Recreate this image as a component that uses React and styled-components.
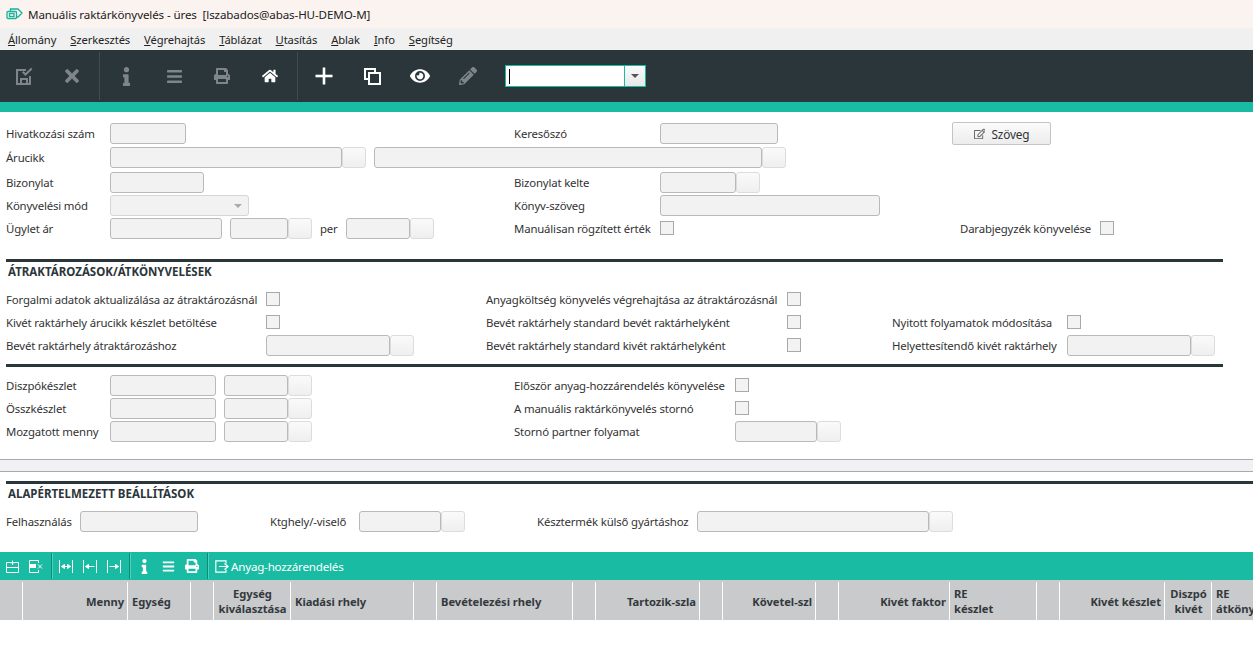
import React from 'react';
import styled, { createGlobalStyle } from 'styled-components';
import { FaTimes, FaInfo, FaBars, FaPrint, FaHome, FaEye, FaPencilAlt, FaRegEdit } from 'react-icons/fa';

const dark = '#2b363b';
const teal = '#1abba3';

const GlobalStyle = createGlobalStyle`
  html, body {
    margin: 0;
    padding: 0;
    background: #fff;
    overflow: hidden;
  }
  body {
    font-family: "Noto Sans", "Open Sans", sans-serif;
    font-size: 11.4px;
    letter-spacing: -0.17px;
    color: #333;
  }
`;

const Page = styled.div`
  width: 1253px;
  height: 668px;
  overflow: hidden;
  background: #fff;
`;

const TitleBar = styled.div`
  height: 28px;
  display: flex;
  align-items: center;
  gap: 5px;
  padding-left: 6px;
  background: #fbf3f0;
  color: #222;
  font-size: 11.6px;
  letter-spacing: -0.12px;
`;

const MenuBar = styled.div`
  height: 22px;
  display: flex;
  align-items: center;
  gap: 14px;
  padding-left: 8px;
  background: #f0f0f0;
  color: #222;
  font-size: 11.2px;
  letter-spacing: -0.1px;
`;

const Toolbar = styled.div`
  height: 52px;
  display: flex;
  align-items: center;
  background: ${dark};
`;

const ToolButton = styled.div`
  width: 48px;
  height: 48px;
  display: flex;
  align-items: center;
  justify-content: center;
  color: ${p => (p.$off ? '#7f8689' : '#fff')};
  font-size: ${p => p.$size || 17}px;
`;

const ToolSep = styled.div`
  width: 1px;
  height: 48px;
  margin: 0 2px 0 3px;
  background: #414c51;
`;

const Combo = styled.div`
  width: 141px;
  height: 22px;
  box-sizing: border-box;
  margin-left: 13px;
  display: flex;
  border: 1px solid ${teal};
  background: #fff;
`;

const ComboText = styled.div`
  flex: 1;
  display: flex;
  align-items: center;
  padding-left: 3px;
`;

const Cursor = styled.div`
  width: 1px;
  height: 15px;
  background: #000;
`;

const ComboButton = styled.div`
  width: 20px;
  display: flex;
  align-items: center;
  justify-content: center;
  border-left: 1px solid ${teal};
  background: linear-gradient(#fafafa, #e8e8e8);
`;

const Arrow = styled.div`
  width: 0;
  height: 0;
  border-left: 4px solid transparent;
  border-right: 4px solid transparent;
  border-top: 4px solid ${p => p.$color || '#555'};
`;

const AccentBar = styled.div`
  height: 10px;
  background: ${teal};
`;

const Row = styled.div`
  height: 21px;
  margin-top: ${p => p.$mt || 0}px;
  padding-left: 6px;
  display: flex;
  align-items: center;
`;

const Label = styled.div`
  width: ${p => p.$w}px;
  margin-left: ${p => p.$ml || 0}px;
  flex: none;
  white-space: nowrap;
`;

const Input = styled.div`
  width: ${p => p.$w}px;
  height: 21px;
  box-sizing: border-box;
  margin-left: ${p => p.$ml || 0}px;
  flex: none;
  border: 1px solid #b9b9b9;
  border-radius: 3px;
  background: #f2f2f2;
`;

const Lookup = styled.div`
  width: 24px;
  height: 21px;
  box-sizing: border-box;
  flex: none;
  border: 1px solid #dcdcdc;
  border-radius: 3px;
  background: linear-gradient(#fafafa, #efefef);
`;

const SelectBox = styled(Input)`
  display: flex;
  align-items: center;
  justify-content: flex-end;
  padding-right: 6px;
  border-color: #d6d6d6;
`;

const Check = styled.div`
  width: 14px;
  height: 14px;
  box-sizing: border-box;
  margin-left: ${p => p.$ml || 0}px;
  margin-bottom: 1px;
  flex: none;
  border: 1px solid #a9a9a9;
  background: #f3f3f3;
`;

const TextButton = styled.div`
  width: 99px;
  height: 23px;
  box-sizing: border-box;
  margin-left: ${p => p.$ml}px;
  flex: none;
  display: flex;
  align-items: center;
  justify-content: center;
  gap: 6px;
  border: 1px solid #c4c4c4;
  border-radius: 2px;
  background: linear-gradient(#fbfbfb, #ececec);
  color: #333;
  font-size: 11.8px;
  svg {
    color: #666;
  }
`;

const Rule = styled.div`
  height: ${p => p.$h || 3}px;
  margin-top: ${p => p.$mt || 0}px;
  margin-left: 6px;
  width: ${p => p.$w}px;
  background: ${dark};
`;

const SectionTitle = styled.div`
  height: 19px;
  line-height: 19px;
  padding-left: 8px;
  font-weight: 700;
  font-size: 11.5px;
  letter-spacing: 0;
  color: #2b363b;
`;

const Band = styled.div`
  height: 11px;
  margin-top: 17px;
  border-top: 1px solid #aaa;
  border-bottom: 1px solid #aaa;
  background: #f0f0f5;
`;

const GridBar = styled.div`
  height: 28px;
  margin-top: 20px;
  display: flex;
  align-items: center;
  background: ${teal};
  color: #fff;
`;

const GridButton = styled.div`
  width: 24px;
  height: 26px;
  display: flex;
  align-items: center;
  justify-content: center;
  font-size: ${p => p.$size || 13}px;
`;

const GridSep = styled.div`
  width: 1px;
  height: 26px;
  margin: 0 2px 0 3px;
  background: #0c8a78;
  box-shadow: 1px 0 0 #4fd0bc;
`;

const GridAction = styled.div`
  display: flex;
  align-items: center;
  gap: 2px;
  margin-left: 5px;
  font-size: 11.6px;
  letter-spacing: -0.2px;
`;

const HeaderRow = styled.div`
  height: 40px;
  display: grid;
  grid-template-columns: 22px 105px 63px 23px 77px 123px 23px 136px 23px 104px 23px 93px 23px 111px 87px 23px 105px 47px 60px;
  width: 1270px;
  background: #c9cacc;
`;

const HeaderCell = styled.div`
  margin-top: 2px;
  padding: 0 3px 0 4px;
  border-left: ${p => (p.$first ? 'none' : '1px solid #fff')};
  display: flex;
  align-items: center;
  justify-content: ${p => (p.$align === 'right' ? 'flex-end' : p.$align === 'center' ? 'center' : 'flex-start')};
  text-align: ${p => p.$align || 'left'};
  font-weight: 700;
  font-size: 11.2px;
  letter-spacing: -0.05px;
  line-height: 15px;
  color: #33393d;
  overflow: hidden;
`;

const AppLogo = () => (
  <svg width="17" height="13" viewBox="0 0 17 13" fill="none" stroke="#16b39b" strokeWidth="1.3">
    <path d="M4.5 3V1h7.5l4 4-4 4H11" />
    <rect x="1" y="3.5" width="9.5" height="7" rx="1" />
    <rect x="3.5" y="5.5" width="4.5" height="3" />
  </svg>
);

const SaveIcon = () => (
  <svg width="18" height="18" viewBox="0 0 18 18" fill="#7f8689">
    <path fillRule="evenodd" d="M1 2h10v2H3v12h2v-5h8v5h1V9h2v9H1zM7 13v3h4v-3z" />
    <path d="M7 5.5l1.5-1.5 2 2L16 .8 17.4 2.2 10.5 9z" />
  </svg>
);

const PlusIcon = () => (
  <svg width="18" height="18" viewBox="0 0 18 18" fill="#fff">
    <rect x="0.5" y="7.7" width="17" height="2.6" />
    <rect x="7.7" y="0.5" width="2.6" height="17" />
  </svg>
);

const CopyIcon = () => (
  <svg width="17" height="17" viewBox="0 0 17 17" fill="none" stroke="#fff" strokeWidth="2">
    <path d="M11 4V1H1v10h3" />
    <rect x="5" y="5" width="11" height="11" />
  </svg>
);

const RowAddIcon = () => (
  <svg width="13" height="13" viewBox="0 0 13 13" fill="none" stroke="#fff" strokeWidth="1">
    <path d="M4 2.5H.5v10h12v-10H9M.5 7.5h12M6.5 .5v4.5M4 2.7h5" />
  </svg>
);

const RowRemoveIcon = () => (
  <svg width="14" height="13" viewBox="0 0 14 13" fill="none" stroke="#fff" strokeWidth="1">
    <path d="M9.5 3V.5H.5v12h9V10" />
    <rect x="1" y="4" width="6" height="4" fill="#fff" stroke="none" />
    <path d="M9 4.5l4 4M13 4.5l-4 4" />
  </svg>
);

const ColumnIcon = ({ left, right }) => (
  <svg width="14" height="13" viewBox="0 0 14 13" fill="none" stroke="#fff" strokeWidth="1">
    <path d="M.5 0v13M13.5 0v13M2.5 6.5h9" />
    {left && <path d="M5.5 4.5l-3 2 3 2z" fill="#fff" />}
    {right && <path d="M8.5 4.5l3 2-3 2z" fill="#fff" />}
  </svg>
);

const ExportIcon = () => (
  <svg width="14" height="13" viewBox="0 0 14 13" fill="none" stroke="#fff" strokeWidth="1.2">
    <path d="M11 3.5V.8H.8v11.4H11V9.5" />
    <path d="M4 6.5h9M9.5 3.5l3.5 3-3.5 3" />
  </svg>
);

const MenuItem = ({ first, rest }) => (
  <span><u>{first}</u>{rest}</span>
);

const headers = [
  { text: '', first: true },
  { text: 'Menny', align: 'right' },
  { text: 'Egység' },
  { text: '' },
  { text: 'Egység kiválasztása', align: 'center' },
  { text: 'Kiadási rhely' },
  { text: '' },
  { text: 'Bevételezési rhely' },
  { text: '' },
  { text: 'Tartozik-szla', align: 'right' },
  { text: '' },
  { text: 'Követel-szl', align: 'right' },
  { text: '' },
  { text: 'Kivét faktor', align: 'right' },
  { text: <>RE<br />készlet</> },
  { text: '' },
  { text: 'Kivét készlet', align: 'right' },
  { text: 'Diszpó kivét', align: 'center' },
  { text: <>RE<br />átkönyv.</> },
];

export default function App() {
  return (
    <Page>
      <GlobalStyle />
      <TitleBar>
        <AppLogo />
        <span>Manuális raktárkönyvelés - üres&nbsp; [lszabados@abas-HU-DEMO-M]</span>
      </TitleBar>
      <MenuBar>
        <MenuItem first="Á" rest="llomány" />
        <MenuItem first="S" rest="zerkesztés" />
        <MenuItem first="V" rest="égrehajtás" />
        <MenuItem first="T" rest="áblázat" />
        <MenuItem first="U" rest="tasítás" />
        <MenuItem first="A" rest="blak" />
        <MenuItem first="I" rest="nfo" />
        <MenuItem first="S" rest="egítség" />
      </MenuBar>
      <Toolbar>
        <ToolButton><SaveIcon /></ToolButton>
        <ToolButton $off $size={20}><FaTimes /></ToolButton>
        <ToolSep />
        <ToolButton $off $size={19}><FaInfo /></ToolButton>
        <ToolButton $off $size={17}><FaBars /></ToolButton>
        <ToolButton $off $size={16}><FaPrint /></ToolButton>
        <ToolButton $size={16}><FaHome /></ToolButton>
        <ToolSep />
        <ToolButton><PlusIcon /></ToolButton>
        <ToolButton><CopyIcon /></ToolButton>
        <ToolButton $size={20}><FaEye /></ToolButton>
        <ToolButton $off $size={18}><FaPencilAlt /></ToolButton>
        <Combo>
          <ComboText><Cursor /></ComboText>
          <ComboButton><Arrow /></ComboButton>
        </Combo>
      </Toolbar>
      <AccentBar />

      <Row $mt={11}>
        <Label $w={104}>Hivatkozási szám</Label>
        <Input $w={76} />
        <Label $w={146} $ml={328}>Keresőszó</Label>
        <Input $w={118} />
        <TextButton $ml={174}><FaRegEdit />Szöveg</TextButton>
      </Row>
      <Row $mt={3}>
        <Label $w={104}>Árucikk</Label>
        <Input $w={232} />
        <Lookup />
        <Input $w={388} $ml={8} />
        <Lookup />
      </Row>
      <Row $mt={4}>
        <Label $w={104}>Bizonylat</Label>
        <Input $w={94} />
        <Label $w={146} $ml={310}>Bizonylat kelte</Label>
        <Input $w={76} />
        <Lookup />
      </Row>
      <Row $mt={2}>
        <Label $w={104}>Könyvelési mód</Label>
        <SelectBox $w={139}><Arrow $color="#aaa" /></SelectBox>
        <Label $w={146} $ml={265}>Könyv-szöveg</Label>
        <Input $w={220} />
      </Row>
      <Row $mt={2}>
        <Label $w={104}>Ügylet ár</Label>
        <Input $w={112} />
        <Input $w={58} $ml={8} />
        <Lookup />
        <Label $w={26} $ml={8}>per</Label>
        <Input $w={64} />
        <Lookup />
        <Label $w={146} $ml={80}>Manuálisan rögzített érték</Label>
        <Check />
        <Label $w={140} $ml={286}>Darabjegyzék könyvelése</Label>
        <Check />
      </Row>

      <Rule $mt={20} $w={1217} />
      <SectionTitle>ÁTRAKTÁROZÁSOK/ÁTKÖNYVELÉSEK</SectionTitle>
      <Row $mt={8}>
        <Label $w={260}>Forgalmi adatok aktualizálása az átraktározásnál</Label>
        <Check />
        <Label $w={301} $ml={206}>Anyagköltség könyvelés végrehajtása az átraktározásnál</Label>
        <Check />
      </Row>
      <Row $mt={2}>
        <Label $w={260}>Kivét raktárhely árucikk készlet betöltése</Label>
        <Check />
        <Label $w={301} $ml={206}>Bevét raktárhely standard bevét raktárhelyként</Label>
        <Check />
        <Label $w={175} $ml={91}>Nyitott folyamatok módosítása</Label>
        <Check />
      </Row>
      <Row $mt={2}>
        <Label $w={260}>Bevét raktárhely átraktározáshoz</Label>
        <Input $w={124} />
        <Lookup />
        <Label $w={301} $ml={72}>Bevét raktárhely standard kivét raktárhelyként</Label>
        <Check />
        <Label $w={175} $ml={91}>Helyettesítendő kivét raktárhely</Label>
        <Input $w={124} />
        <Lookup />
      </Row>
      <Rule $mt={8} $w={1217} />
      <Row $mt={8}>
        <Label $w={104}>Diszpókészlet</Label>
        <Input $w={106} />
        <Input $w={64} $ml={8} />
        <Lookup />
        <Label $w={221} $ml={202}>Először anyag-hozzárendelés könyvelése</Label>
        <Check />
      </Row>
      <Row $mt={2}>
        <Label $w={104}>Összkészlet</Label>
        <Input $w={106} />
        <Input $w={64} $ml={8} />
        <Lookup />
        <Label $w={221} $ml={202}>A manuális raktárkönyvelés stornó</Label>
        <Check />
      </Row>
      <Row $mt={2}>
        <Label $w={104}>Mozgatott menny</Label>
        <Input $w={106} />
        <Input $w={64} $ml={8} />
        <Lookup />
        <Label $w={221} $ml={202}>Stornó partner folyamat</Label>
        <Input $w={82} />
        <Lookup />
      </Row>

      <Band />
      <Rule $mt={9} $w={1247} />
      <SectionTitle>ALAPÉRTELMEZETT BEÁLLÍTÁSOK</SectionTitle>
      <Row $mt={8}>
        <Label $w={74}>Felhasználás</Label>
        <Input $w={118} />
        <Label $w={89} $ml={72}>Ktghely/-viselő</Label>
        <Input $w={82} />
        <Lookup />
        <Label $w={160} $ml={72}>Késztermék külső gyártáshoz</Label>
        <Input $w={232} />
        <Lookup />
      </Row>

      <GridBar>
        <GridButton><RowAddIcon /></GridButton>
        <GridButton><RowRemoveIcon /></GridButton>
        <GridSep />
        <GridButton><ColumnIcon left right /></GridButton>
        <GridButton><ColumnIcon left /></GridButton>
        <GridButton><ColumnIcon right /></GridButton>
        <GridSep />
        <GridButton $size={15}><FaInfo /></GridButton>
        <GridButton $size={13}><FaBars /></GridButton>
        <GridButton $size={14}><FaPrint /></GridButton>
        <GridSep />
        <GridAction><ExportIcon />Anyag-hozzárendelés</GridAction>
      </GridBar>
      <HeaderRow>
        {headers.map((h, i) => (
          <HeaderCell key={i} $first={h.first} $align={h.align}>
            <span>{h.text}</span>
          </HeaderCell>
        ))}
      </HeaderRow>
    </Page>
  );
}
